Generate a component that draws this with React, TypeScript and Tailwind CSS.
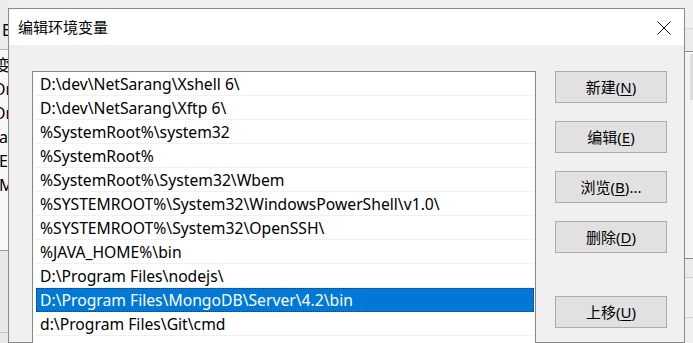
const paths = [
  "D:\\dev\\NetSarang\\Xshell 6\\",
  "D:\\dev\\NetSarang\\Xftp 6\\",
  "%SystemRoot%\\system32",
  "%SystemRoot%",
  "%SystemRoot%\\System32\\Wbem",
  "%SYSTEMROOT%\\System32\\WindowsPowerShell\\v1.0\\",
  "%SYSTEMROOT%\\System32\\OpenSSH\\",
  "%JAVA_HOME%\\bin",
  "D:\\Program Files\\nodejs\\",
  "D:\\Program Files\\MongoDB\\Server\\4.2\\bin",
  "d:\\Program Files\\Git\\cmd",
  "",
];

const selected = 9;

function Btn({ label, hot, rest, mt }: { label: string; hot: string; rest: string; mt: string }) {
  return (
    <button
      className={`${mt} flex h-[32px] w-[112px] items-center justify-center border border-[#adadad] bg-[#e1e1e1] text-[15px] text-black`}
    >
      {label}(<span className="underline underline-offset-2">{hot}</span>){rest}
    </button>
  );
}

export default function App() {
  return (
    <div
      className="flex h-[343px] w-[693px] overflow-hidden bg-[#f0f0f0] text-black"
      style={{ fontFamily: '"Noto Sans", "Noto Sans CJK SC", sans-serif' }}
    >
      {/* window behind, left edge */}
      <div className="flex w-[8px] shrink-0 flex-col overflow-hidden text-[16px] leading-none">
        <div className="h-[50px] border-b border-[#b5b5b5] bg-[#ececec] pt-[22px]">
          <span className="ml-[2px] whitespace-nowrap">B</span>
        </div>
        <div className="flex h-[200px] flex-col gap-[8px] bg-[#f7f7f7] pt-[7px] whitespace-nowrap">
          <span className="-ml-[5px]">变</span>
          <span className="-ml-[7px]">Or</span>
          <span className="-ml-[7px]">Or</span>
          <span className="-ml-[1px]">a</span>
          <span className="-ml-[1px]">E</span>
          <span className="-ml-[1px]">M</span>
        </div>
        <div className="h-[82px] border-t border-[#9a9a9a] bg-[#e8e8e8]" />
        <div className="flex-1 border-t border-[#c8c8c8] bg-[#e8e8e8]" />
      </div>

      {/* dialog */}
      <div className="mt-[8px] flex w-[677px] shrink-0 flex-col border border-[#8a8a8a] bg-[#f0f0f0]">
        <div className="flex h-[36px] shrink-0 items-center justify-between bg-white pl-[9px] pr-[13px]">
          <span className="text-[15px]">编辑环境变量</span>
          <svg width="14" height="14" viewBox="0 0 14 14" className="mt-[1px]">
            <path d="M0.5 0.5 L13.5 13.5 M13.5 0.5 L0.5 13.5" stroke="#111" strokeWidth="1" fill="none" />
          </svg>
        </div>

        <div className="flex flex-1 pl-[23px] pt-[26px]">
          <div className="flex w-[504px] flex-col border border-b-0 border-[#828790] bg-white pl-[3px] pr-[1px] text-[15.7px]">
            {paths.map((p, i) => (
              <div
                key={i}
                className={
                  i === selected
                    ? "flex h-[24px] items-center border border-dotted border-[#0c3f6e] bg-[#0078d7] pl-[3px] pt-[1px] text-white"
                    : "flex h-[24px] items-center border-b border-[#f0f0f0] pl-[4px] pt-[2px]"
                }
              >
                <span className="whitespace-nowrap">{p}</span>
              </div>
            ))}
          </div>

          <div className="ml-[19px] flex flex-col">
            <Btn label="新建" hot="N" rest="" mt="mt-0" />
            <Btn label="编辑" hot="E" rest="" mt="mt-[18px]" />
            <Btn label="浏览" hot="B" rest="..." mt="mt-[18px]" />
            <Btn label="删除" hot="D" rest="" mt="mt-[18px]" />
            <Btn label="上移" hot="U" rest="" mt="mt-[43px]" />
          </div>
        </div>
      </div>

      {/* window behind, right edge */}
      <div className="flex flex-1 flex-col">
        <div className="h-[29px] border-b border-[#d8d8d8] bg-[#f0f0f0]" />
        <div className="h-[23px] border-b border-[#8c8c8c] bg-[#ececec]" />
        <div className="flex h-[207px] justify-end border-b border-[#8c8c8c] bg-[#f4f4f4]">
          <div className="mt-[2px] h-[46px] w-[3px] bg-[#dcdcdc]" />
        </div>
        <div className="h-[19px] border-b border-[#d0d0d0] bg-[#ececec]" />
        <div className="h-[40px] border-b border-[#d0d0d0] bg-[#f0f0f0]" />
        <div className="flex-1 bg-[#f0f0f0]" />
      </div>
    </div>
  );
}
